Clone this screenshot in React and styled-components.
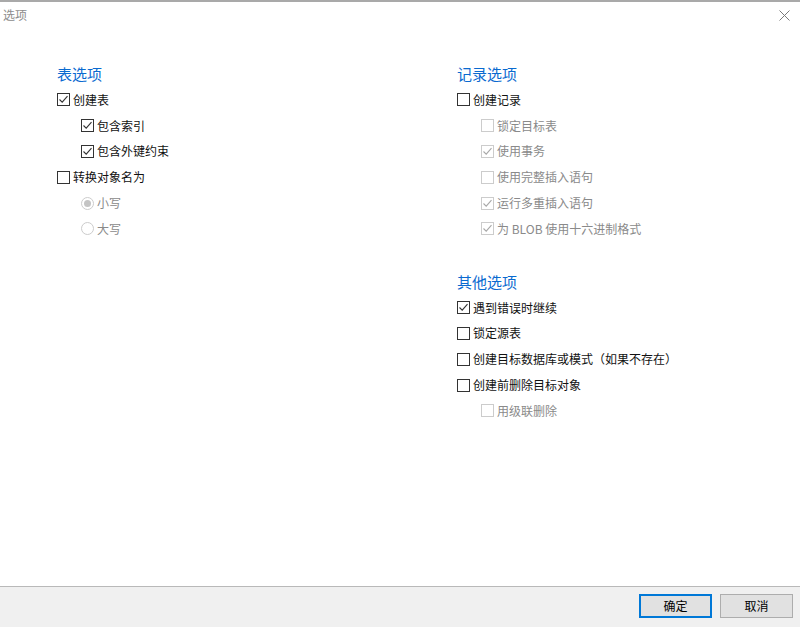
import React from 'react';
import styled, { createGlobalStyle } from 'styled-components';

const GlobalStyle = createGlobalStyle`
    html, body {
        margin: 0;
        padding: 0;
        background: #ffffff;
    }
    body {
        font-family: "Noto Sans CJK SC", "Noto Sans", sans-serif;
        font-size: 12px;
    }
`;

const Dialog = styled.div`
    width: 800px;
    height: 627px;
    display: flex;
    flex-direction: column;
    box-sizing: border-box;
    border-top: 2px solid #a9a9a9;
    background: #ffffff;
`;

const TitleBar = styled.div`
    height: 25px;
    display: flex;
    align-items: center;
    justify-content: space-between;
    padding: 0 10px 0 3px;
    color: #8c8c8c;
    font-size: 12px;
`;

const CloseButton = styled.div`
    width: 12px;
    height: 12px;
    display: flex;
    align-items: center;
    justify-content: center;
    margin-top: 1px;
`;

const Body = styled.div`
    flex: 1;
    display: grid;
    grid-template-columns: 400px 1fr;
    padding: 37px 0 0 57px;
`;

const Column = styled.div`
    display: flex;
    flex-direction: column;
    gap: 30px;
`;

const Section = styled.div`
    display: flex;
    flex-direction: column;
`;

const Heading = styled.div`
    height: 20px;
    line-height: 20px;
    font-size: 15px;
    color: #0a6ad0;
    margin-bottom: 3px;
`;

const Row = styled.div`
    height: 25.8px;
    display: flex;
    align-items: center;
    gap: 3px;
    padding-left: ${p => (p.$indent ? 24 : 0)}px;
    color: ${p => (p.$disabled ? '#8a8a8a' : '#111111')};
    line-height: 1;
`;

const Box = styled.span`
    width: 13px;
    height: 13px;
    box-sizing: border-box;
    border: 1px solid ${p => (p.$disabled ? '#cccccc' : '#333333')};
    background: #ffffff;
    display: flex;
    align-items: center;
    justify-content: center;
    flex: none;
`;

const Radio = styled.span`
    width: 13px;
    height: 13px;
    box-sizing: border-box;
    border-radius: 50%;
    border: 1px solid #cccccc;
    display: flex;
    align-items: center;
    justify-content: center;
    flex: none;

    &::after {
        content: '';
        width: 7px;
        height: 7px;
        border-radius: 50%;
        background: ${p => (p.$checked ? '#c4c4c4' : 'transparent')};
    }
`;

const Footer = styled.div`
    height: 41px;
    box-sizing: border-box;
    border-top: 1px solid #b9b9b9;
    background: #f0f0f0;
    display: flex;
    justify-content: flex-end;
    align-items: flex-start;
    gap: 8px;
    padding: 7px 7px 0 0;
    flex: none;
`;

const Button = styled.button`
    width: 73px;
    height: 24px;
    box-sizing: border-box;
    background: #e1e1e1;
    border: ${p => (p.$primary ? '2px solid #0078d7' : '1px solid #adadad')};
    font-family: "Noto Sans CJK SC", "Noto Sans", sans-serif;
    font-size: 12px;
    color: #000000;
    padding: 0;
    line-height: 1;
`;

const Check = ({ checked, disabled }) => (
    <Box $disabled={disabled}>
        {checked && (
            <svg width="11" height="11" viewBox="0 0 11 11">
                <path
                    d="M1.5 5.5 L4.2 8.2 L9.5 2.2"
                    fill="none"
                    stroke={disabled ? '#a8a8a8' : '#333333'}
                    strokeWidth="1.1"
                />
            </svg>
        )}
    </Box>
);

const CheckRow = ({ label, checked, disabled, indent }) => (
    <Row $disabled={disabled} $indent={indent}>
        <Check checked={checked} disabled={disabled} />
        <span>{label}</span>
    </Row>
);

const RadioRow = ({ label, checked }) => (
    <Row $disabled $indent>
        <Radio $checked={checked} />
        <span>{label}</span>
    </Row>
);

const App = () => {
    return (
        <>
            <GlobalStyle />
            <Dialog>
                <TitleBar>
                    <span>选项</span>
                    <CloseButton>
                        <svg width="11" height="11" viewBox="0 0 11 11">
                            <path d="M0.5 0.5 L10.5 10.5 M10.5 0.5 L0.5 10.5" stroke="#7a7a7a" strokeWidth="1" />
                        </svg>
                    </CloseButton>
                </TitleBar>
                <Body>
                    <Column>
                        <Section>
                            <Heading>表选项</Heading>
                            <CheckRow label="创建表" checked />
                            <CheckRow label="包含索引" checked indent />
                            <CheckRow label="包含外键约束" checked indent />
                            <CheckRow label="转换对象名为" />
                            <RadioRow label="小写" checked />
                            <RadioRow label="大写" />
                        </Section>
                    </Column>
                    <Column>
                        <Section>
                            <Heading>记录选项</Heading>
                            <CheckRow label="创建记录" />
                            <CheckRow label="锁定目标表" disabled indent />
                            <CheckRow label="使用事务" checked disabled indent />
                            <CheckRow label="使用完整插入语句" disabled indent />
                            <CheckRow label="运行多重插入语句" checked disabled indent />
                            <CheckRow label="为 BLOB 使用十六进制格式" checked disabled indent />
                        </Section>
                        <Section>
                            <Heading>其他选项</Heading>
                            <CheckRow label="遇到错误时继续" checked />
                            <CheckRow label="锁定源表" />
                            <CheckRow label="创建目标数据库或模式（如果不存在）" />
                            <CheckRow label="创建前删除目标对象" />
                            <CheckRow label="用级联删除" disabled indent />
                        </Section>
                    </Column>
                </Body>
                <Footer>
                    <Button $primary>确定</Button>
                    <Button>取消</Button>
                </Footer>
            </Dialog>
        </>
    );
};

export default App;
